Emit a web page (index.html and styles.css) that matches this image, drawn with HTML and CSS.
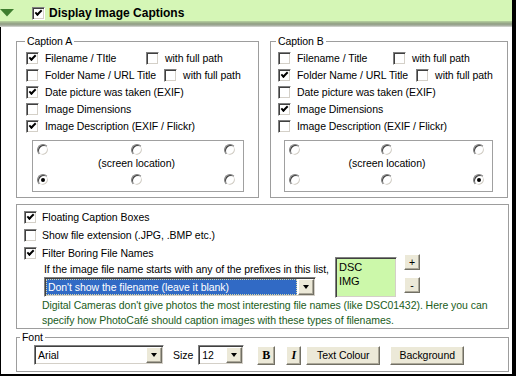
FILE: index.html
```html
<!DOCTYPE html>
<html lang="en">
<head>
  <meta charset="UTF-8">
  <meta name="viewport" content="width=device-width, initial-scale=1.0">
  <title>Display Image Captions</title>
  <link rel="stylesheet" href="styles.css">
</head>
<body>

<div class="window">
  <div class="header">
    <svg class="twisty" width="14" height="8" viewBox="0 0 14 8"><polygon points="0,0 14,0 7,7.5"/></svg>
    <span class="check on"></span>
    <span class="header-title">Display Image Captions</span>
  </div>
  <div class="shade"></div>

  <div class="main">
    <div class="captions">
      <fieldset class="group caption caption-a">
        <legend>Caption A</legend>
        <div class="opt-row">
          <span class="opt fixed"><span class="check on"></span>Filename / TItle</span>
          <span class="opt"><span class="check"></span>with full path</span>
        </div>
        <div class="opt-row">
          <span class="opt"><span class="check"></span>Folder Name / URL Title</span>
          <span class="opt"><span class="check"></span>with full path</span>
        </div>
        <div class="opt-row"><span class="opt"><span class="check on"></span>Date picture was taken (EXIF)</span></div>
        <div class="opt-row"><span class="opt"><span class="check"></span>Image Dimensions</span></div>
        <div class="opt-row"><span class="opt"><span class="check on"></span>Image Description (EXIF / Flickr)</span></div>

        <div class="locations">
          <div class="radio-row"><span class="radio"></span><span class="radio"></span><span class="radio"></span></div>
          <div class="loc-label">(screen location)</div>
          <div class="radio-row"><span class="radio on"></span><span class="radio"></span><span class="radio"></span></div>
        </div>
      </fieldset>

      <fieldset class="group caption caption-b">
        <legend>Caption B</legend>
        <div class="opt-row">
          <span class="opt fixed"><span class="check"></span>Filename / Title</span>
          <span class="opt"><span class="check"></span>with full path</span>
        </div>
        <div class="opt-row">
          <span class="opt"><span class="check on"></span>Folder Name / URL Title</span>
          <span class="opt"><span class="check"></span>with full path</span>
        </div>
        <div class="opt-row"><span class="opt"><span class="check"></span>Date picture was taken (EXIF)</span></div>
        <div class="opt-row"><span class="opt"><span class="check on"></span>Image Dimensions</span></div>
        <div class="opt-row"><span class="opt"><span class="check"></span>Image Description (EXIF / Flickr)</span></div>

        <div class="locations">
          <div class="radio-row"><span class="radio"></span><span class="radio"></span><span class="radio"></span></div>
          <div class="loc-label">(screen location)</div>
          <div class="radio-row"><span class="radio"></span><span class="radio"></span><span class="radio on"></span></div>
        </div>
      </fieldset>
    </div>

    <fieldset class="group options">
      <div class="opt-row tall"><span class="opt"><span class="check on"></span>Floating Caption Boxes</span></div>
      <div class="opt-row tall"><span class="opt"><span class="check"></span>Show file extension (.JPG, .BMP etc.)</span></div>

      <div class="filter">
        <div class="filter-left">
          <div class="opt-row tall"><span class="opt"><span class="check on"></span>Filter Boring File Names</span></div>
          <div class="filter-hint">If the image file name starts with any of the prefixes in this list,</div>
          <div class="combo filter-combo">
            <span class="combo-text selected">Don't show the filename (leave it blank)</span>
            <span class="combo-btn"></span>
          </div>
        </div>
        <div class="prefix-list">
          <div>DSC</div>
          <div>IMG</div>
        </div>
        <div class="prefix-buttons">
          <span class="btn small">+</span>
          <span class="btn small">-</span>
        </div>
      </div>

      <p class="note">Digital Cameras don't give photos the most interesting file names (like DSC01432). Here you can<br>specify how PhotoCafé should caption images with these types of filenames.</p>
    </fieldset>

    <fieldset class="group font">
      <legend>Font</legend>
      <div class="font-row">
        <div class="combo font-name">
          <span class="combo-text">Arial</span>
          <span class="combo-btn"></span>
        </div>
        <span class="size-label">Size</span>
        <div class="combo font-size">
          <span class="combo-text">12</span>
          <span class="combo-btn"></span>
        </div>
        <span class="btn bold">B</span>
        <span class="btn italic">I</span>
        <span class="btn text-colour">Text Colour</span>
        <span class="btn background">Background</span>
      </div>
    </fieldset>
  </div>
</div>

</body>
</html>
```

FILE: styles.css
```css
body {
  margin: 0;
  background: #000;
  font-family: "Liberation Sans", Arial, sans-serif;
  font-size: 10.5px;
  letter-spacing: -0.05px;
  line-height: 13px;
  color: #000;
}

.window {
  width: 512px;
  height: 374px;
  background: #fff;
  display: flex;
  flex-direction: column;
}

/* green title strip */
.header {
  height: 21px;
  box-sizing: border-box;
  padding-top: 5px;
  background: #d5f6b6;
  display: flex;
  align-items: center;
}

.twisty {
  display: block;
  fill: #3e7e2e;
}

.header .check {
  margin-left: 18px;
}

.header-title {
  margin-left: 4px;
  font-weight: bold;
  font-size: 12px;
  letter-spacing: 0;
}

.shade {
  height: 6px;
  background: linear-gradient(to bottom, #b7d29f, #8f9c83 50%, #b5bab0 85%, #e6e6e6);
}

.main {
  flex: 1;
  border-left: 1px solid #000;
  padding: 8px 3px 0 15px;
}

/* checkbox + radio, classic sunken look */
.check {
  position: relative;
  flex: none;
  width: 13px;
  height: 13px;
  box-sizing: border-box;
  border: 1px solid;
  border-color: #808080 #fff #fff #808080;
  box-shadow: inset 1px 1px #404040, inset -1px -1px #d4d0c8;
  background: #fff;
}

.check.on::after {
  content: "";
  position: absolute;
  left: 2px;
  top: 2px;
  width: 5px;
  height: 2px;
  border-left: 2px solid #000;
  border-bottom: 2px solid #000;
  transform: rotate(-45deg);
}

.radio {
  position: relative;
  flex: none;
  width: 12px;
  height: 12px;
  box-sizing: border-box;
  border-radius: 50%;
  border: 1px solid;
  border-color: #808080 #fff #fff #808080;
  box-shadow: inset 1px 1px #404040, inset -1px -1px #d4d0c8;
  background: #fff;
}

.radio.on::after {
  content: "";
  position: absolute;
  left: 3px;
  top: 3px;
  width: 4px;
  height: 4px;
  border-radius: 50%;
  background: #000;
}

/* group boxes */
.group {
  margin: 0;
  min-width: 0;
  border: 1px solid #9d9d9d;
}

.group legend {
  padding: 0 2px;
  line-height: 13px;
}

.captions {
  display: grid;
  grid-template-columns: 243px 238px;
  column-gap: 11px;
}

.caption {
  padding: 2px 8px 5px 9px;
}

.caption-a legend {
  margin-left: -1px;
}

.caption-b {
  padding-left: 7px;
}

.caption-b legend {
  margin-left: -2px;
}

.opt-row {
  display: flex;
  align-items: center;
  height: 17px;
}

.opt-row.tall {
  height: 18px;
}

.opt {
  display: flex;
  align-items: center;
  white-space: nowrap;
}

.opt .check {
  margin-right: 6px;
}

.opt + .opt {
  margin-left: 8px;
}

.caption-a .opt.fixed {
  width: 120px;
}

.caption-b .opt.fixed {
  width: 115px;
}

.opt.fixed + .opt {
  margin-left: 0;
}

.locations {
  margin: 5px 6px 0 6px;
  border: 1px solid #a0a0a0;
  padding: 3px 7px 5px 4px;
}

.radio-row {
  display: flex;
  justify-content: space-between;
}

.loc-label {
  margin: 1px 0 4px;
  text-align: center;
}

/* second group */
.options {
  margin-top: 6px;
  padding: 3px 3px 0 7px;
}

.options .opt .check {
  margin-right: 5px;
}

.filter {
  display: flex;
  align-items: flex-start;
}

.filter-left {
  width: 291px;
  flex: none;
}

.filter-hint {
  padding-left: 20px;
  line-height: 15px;
  white-space: nowrap;
}

.combo {
  display: flex;
  height: 20px;
  box-sizing: border-box;
  border: 1px solid;
  border-color: #808080 #fff #fff #808080;
  box-shadow: inset 1px 1px #404040, inset -1px -1px #d4d0c8;
  padding: 1px;
  background: #fff;
}

.combo-text {
  flex: 1;
  padding-left: 2px;
  line-height: 16px;
  white-space: nowrap;
  overflow: hidden;
}

.combo-text.selected {
  margin-right: 1px;
  background: #316ac5;
  color: #fff;
  outline: 1px dotted #d8d8a8;
  outline-offset: -1px;
}

.combo-btn {
  flex: none;
  width: 16px;
  height: 16px;
  box-sizing: border-box;
  border: 1px solid;
  border-color: #fff #716f64 #716f64 #fff;
  box-shadow: inset -1px -1px #aca899;
  background: #ece9d8;
  display: flex;
  align-items: center;
  justify-content: center;
}

.combo-btn::after {
  content: "";
  border-left: 3.5px solid transparent;
  border-right: 3.5px solid transparent;
  border-top: 4px solid #000;
}

.filter-combo {
  margin-left: 20px;
  width: 272px;
}

.prefix-list {
  margin: 13px 0 0 20px;
  width: 62px;
  height: 41px;
  box-sizing: border-box;
  border: 1px solid;
  border-color: #808080 #fff #fff #808080;
  box-shadow: inset 1px 1px #404040, inset -1px -1px #d4d0c8;
  padding: 2px 3px;
  background: #ccf8aa;
  font-size: 11px;
  line-height: 14px;
}

.prefix-buttons {
  margin: 10px 0 0 7px;
  display: flex;
  flex-direction: column;
  gap: 7px;
}

.btn {
  display: flex;
  align-items: center;
  justify-content: center;
  height: 19px;
  box-sizing: border-box;
  border: 1px solid;
  border-color: #fff #716f64 #716f64 #fff;
  box-shadow: inset -1px -1px #aca899;
  background: #ece9d8;
  white-space: nowrap;
}

.btn.small {
  width: 16px;
  height: 16px;
}

.note {
  margin: 0 0 0 18px;
  line-height: 15px;
  color: #1a5c1a;
  white-space: nowrap;
}

/* font group */
.font {
  margin-top: 2px;
  padding: 0 3px 5px 3px;
}

.font-row {
  display: flex;
  align-items: center;
  height: 22px;
  margin-left: 14px;
}

.font-name {
  width: 130px;
}

.size-label {
  margin-left: 9px;
}

.font-size {
  margin-left: 5px;
  width: 46px;
}

.btn.bold {
  margin-left: 13px;
  width: 18px;
  font-family: "Liberation Serif", serif;
  font-weight: bold;
  font-size: 12px;
}

.btn.italic {
  margin-left: 11px;
  width: 15px;
  font-family: "Liberation Serif", serif;
  font-weight: bold;
  font-style: italic;
  font-size: 12px;
}

.btn.text-colour {
  margin-left: 5px;
  width: 74px;
}

.btn.background {
  margin-left: 10px;
  width: 74px;
}
```
